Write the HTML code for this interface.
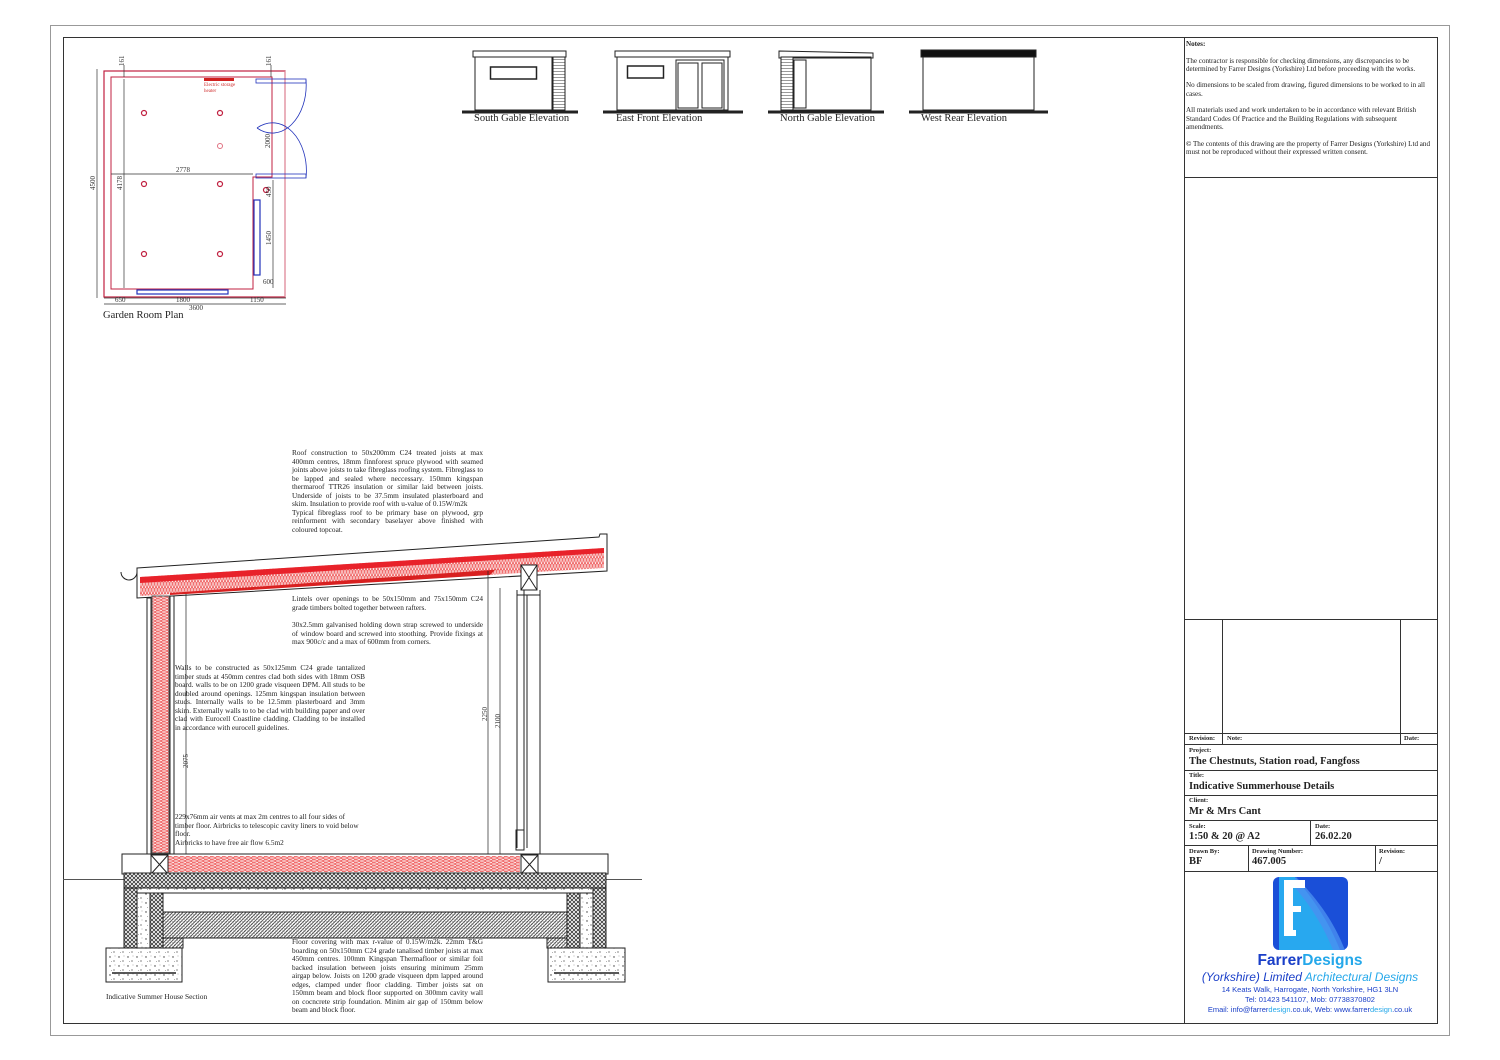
<!DOCTYPE html>
<html><head><meta charset="utf-8"><style>
html,body{margin:0;padding:0;background:#fff;}
body{width:1500px;height:1060px;position:relative;overflow:hidden;font-family:"Liberation Serif",serif;color:#222;}
.t{position:absolute;font-size:7.3px;line-height:8.55px;text-align:justify;text-align-last:left;}
.n{position:absolute;font-size:7.1px;line-height:8.3px;}
.lbl{position:absolute;font-size:10.5px;white-space:nowrap;}
.tb{position:absolute;font-weight:bold;white-space:nowrap;}
.s{font-size:6.5px;}
.b{font-size:10.5px;}
</style></head><body>
<svg width="1500" height="1060" style="position:absolute;left:0;top:0" xmlns="http://www.w3.org/2000/svg">
<defs>
<pattern id="xh" width="4" height="4" patternUnits="userSpaceOnUse"><rect width="4" height="4" fill="#fff"/><path d="M0 0L4 4M4 0L0 4" stroke="#333" stroke-width="0.8"/></pattern>
<pattern id="dh" width="3.5" height="3.5" patternUnits="userSpaceOnUse"><rect width="3.5" height="3.5" fill="#fff"/><path d="M0 3.5L3.5 0" stroke="#444" stroke-width="0.9"/><path d="M0 0L3.5 3.5" stroke="#888" stroke-width="0.5"/></pattern>
<pattern id="conc" width="9" height="9" patternUnits="userSpaceOnUse"><rect width="9" height="9" fill="#fff"/><circle cx="2" cy="3" r="0.7" fill="#333"/><circle cx="6" cy="7" r="0.6" fill="#333"/><circle cx="7" cy="2" r="0.4" fill="#555"/><circle cx="3.5" cy="7.5" r="0.4" fill="#555"/></pattern>
<pattern id="ins" width="3" height="6" patternUnits="userSpaceOnUse"><rect width="3" height="6" fill="#f07070"/><path d="M0 0L1.5 6L3 0" stroke="#fff" stroke-width="0.5" fill="none"/></pattern>
<pattern id="insv" width="6" height="3" patternUnits="userSpaceOnUse"><rect width="6" height="3" fill="#f07070"/><path d="M0 0L6 1.5L0 3" stroke="#fff" stroke-width="0.5" fill="none"/></pattern>
<pattern id="clad" width="4" height="3" patternUnits="userSpaceOnUse"><rect width="4" height="3" fill="#fff"/><path d="M0 2.5H4" stroke="#555" stroke-width="0.6"/></pattern>
</defs>
<rect x="50.5" y="25.5" width="1399" height="1010" fill="none" stroke="#999" stroke-width="1"/>
<rect x="63.5" y="37.5" width="1374" height="986" fill="none" stroke="#333" stroke-width="1"/>
<g stroke="#333" stroke-width="1" fill="none">
<line x1="1184.5" y1="37" x2="1184.5" y2="1023"/>
<line x1="1184" y1="177.5" x2="1437" y2="177.5"/>
<line x1="1184" y1="619.5" x2="1437" y2="619.5"/>
<line x1="1222.5" y1="619" x2="1222.5" y2="744"/>
<line x1="1400.5" y1="619" x2="1400.5" y2="744"/>
<line x1="1184" y1="733.5" x2="1437" y2="733.5"/>
<line x1="1184" y1="744.5" x2="1437" y2="744.5"/>
<line x1="1184" y1="770.5" x2="1437" y2="770.5"/>
<line x1="1184" y1="795.5" x2="1437" y2="795.5"/>
<line x1="1184" y1="820.5" x2="1437" y2="820.5"/>
<line x1="1184" y1="845.5" x2="1437" y2="845.5"/>
<line x1="1184" y1="871.5" x2="1437" y2="871.5"/>
<line x1="1310.5" y1="820" x2="1310.5" y2="845"/>
<line x1="1248.5" y1="845" x2="1248.5" y2="871"/>
<line x1="1375.5" y1="845" x2="1375.5" y2="871"/>
</g>
<rect x="1273" y="877" width="75" height="73" rx="6" fill="#1a4fd8"/>
<path d="M1279 877H1295C1318 905 1330 925 1340 950H1279Z" fill="#28a8ef"/>
<path d="M1296 877C1318 900 1333 920 1345 950H1333C1323 925 1310 905 1292 884Z" fill="#4a8ff0" opacity="0.8"/>
<path d="M1284 880H1305V888H1293V906H1301V912H1293V930H1296V936H1284Z" fill="#fff"/>
<g fill="none">
<rect x="104" y="71" width="181" height="226" stroke="#c02040" stroke-width="1.2"/>
<path d="M111 77H272V177H253V289H111Z" stroke="#c02040" stroke-width="1"/>
<line x1="285" y1="71" x2="285" y2="297" stroke="#e090a0" stroke-width="1"/>
<rect x="137" y="290" width="91" height="4" stroke="#2233bb" stroke-width="1.2"/>
<rect x="254" y="200" width="6" height="75" stroke="#2233bb" stroke-width="1.2"/>
<rect x="256" y="79" width="50" height="4" stroke="#2233bb" stroke-width="0.8"/>
<rect x="256" y="174" width="50" height="4" stroke="#2233bb" stroke-width="0.8"/>
<path d="M306 80A34 48 0 0 1 257 128M306 178A34 48 0 0 0 257 128" stroke="#2233bb" stroke-width="0.8"/>
<rect x="204" y="78" width="30" height="3" fill="#d02020"/>
<g stroke="#c02040" stroke-width="1.2"><circle cx="144" cy="113" r="2.5"/><circle cx="220" cy="113" r="2.5"/><circle cx="144" cy="184" r="2.5"/><circle cx="220" cy="184" r="2.5"/><circle cx="144" cy="254" r="2.5"/><circle cx="220" cy="254" r="2.5"/><circle cx="266" cy="190" r="2.5"/></g>
<circle cx="220" cy="146" r="2.5" stroke="#e07080" stroke-width="1"/>
<g stroke="#333" stroke-width="0.7">
<line x1="97" y1="69" x2="97" y2="298"/><line x1="124" y1="79" x2="124" y2="288"/>
<line x1="111" y1="174" x2="253" y2="174"/>
<line x1="104" y1="304" x2="286" y2="304"/><line x1="104" y1="298" x2="286" y2="298"/>
<line x1="273" y1="180" x2="273" y2="288"/>
<line x1="124" y1="65" x2="124" y2="77"/><line x1="271" y1="65" x2="271" y2="77"/>
</g>
</g>
<g font-family="Liberation Serif,serif" font-size="7" fill="#333">
<text x="95" y="190" transform="rotate(-90 95 190)">4500</text>
<text x="122" y="190" transform="rotate(-90 122 190)">4178</text>
<text x="176" y="172">2778</text>
<text x="270" y="148" transform="rotate(-90 270 148)">2000</text>
<text x="271" y="197" transform="rotate(-90 271 197)">450</text>
<text x="271" y="245" transform="rotate(-90 271 245)">1450</text>
<text x="124" y="66" transform="rotate(-90 124 66)">161</text>
<text x="271" y="66" transform="rotate(-90 271 66)">161</text>
<text x="115" y="302">650</text><text x="176" y="302">1800</text><text x="250" y="302">1150</text>
<text x="189" y="310">3600</text><text x="263" y="284">600</text>
<text x="204" y="86" fill="#d03030" font-size="5">Electric storage</text>
<text x="204" y="92" fill="#d03030" font-size="5">heater</text>
</g>
<g stroke="#222" fill="none" stroke-width="1">
<path d="M473 51L566 51V57H473Z"/><rect x="475" y="57" width="77" height="53"/><rect x="553" y="57" width="12" height="53" fill="url(#clad)"/>
<rect x="490.5" y="67" width="46" height="12" stroke-width="1.5"/>
<line x1="462" y1="112" x2="578" y2="112" stroke-width="3"/>
<rect x="615" y="51" width="115" height="6"/><rect x="617" y="57" width="111" height="53"/>
<rect x="627.5" y="66" width="36" height="12" stroke-width="1.5"/>
<rect x="676" y="60" width="48" height="50"/><rect x="678" y="63" width="20" height="45"/><rect x="702" y="63" width="20" height="45"/>
<line x1="603" y1="112" x2="743" y2="112" stroke-width="3"/>
<path d="M779 51L873 53V58H779Z"/><rect x="781" y="57" width="90" height="53"/><rect x="781" y="57" width="12" height="53" fill="url(#clad)"/><rect x="794" y="60" width="12" height="48"/>
<line x1="768" y1="112" x2="884" y2="112" stroke-width="3"/>
<rect x="921" y="50" width="115" height="7" fill="#111"/><rect x="923" y="57" width="111" height="53"/>
<line x1="909" y1="112" x2="1048" y2="112" stroke-width="3"/>
</g>
<g stroke="#222" stroke-width="1" fill="none">
<path d="M137 568L599 537L600 534H607V545L607 571L137 598Z" fill="#fff"/>
<path d="M140 577L604 548L604 568L140 596Z" fill="url(#ins)" stroke="none"/>
<path d="M140 577L604 548L604 553L140 583Z" fill="#e8222a" stroke="none"/>
<path d="M170 595L490 575L495 570L505 569L170 593Z" fill="#d82020" stroke="none"/>
<path d="M121 572A8 8 0 0 0 137 572" stroke-width="1"/>
<rect x="147" y="598" width="4" height="256"/>
<rect x="152" y="596" width="17" height="257" fill="url(#insv)" stroke="#555"/>
<rect x="170" y="596" width="4" height="258"/>
<line x1="186" y1="594" x2="186" y2="855" stroke-width="0.7"/>
<line x1="488" y1="571" x2="488" y2="855" stroke-width="0.7"/>
<line x1="500" y1="588" x2="500" y2="855" stroke-width="0.7"/>
<rect x="521" y="565" width="16" height="25" fill="#fff"/><path d="M521 565L537 590M537 565L521 590"/>
<path d="M517 590V848M524 590V848M527 595V848M540 590V855M517 595H540"/>
<rect x="516" y="830" width="8" height="20"/>
<rect x="122" y="854" width="486" height="20" fill="#fff"/>
<rect x="168" y="856" width="352" height="16" fill="url(#insv)" stroke="none"/>
<rect x="151" y="855" width="17" height="19"/><path d="M151 855L168 874M168 855L151 874"/>
<rect x="521" y="855" width="17" height="19"/><path d="M521 855L538 874M538 855L521 874"/>
<line x1="63" y1="879.5" x2="642" y2="879.5" stroke="#555"/>
<rect x="124" y="873" width="482" height="15" fill="url(#xh)"/>
<rect x="124" y="888" width="482" height="5" fill="url(#conc)"/>
<rect x="124" y="888" width="13" height="60" fill="url(#xh)"/>
<rect x="137" y="893" width="13" height="55" fill="url(#conc)"/>
<rect x="150" y="893" width="13" height="55" fill="url(#xh)"/>
<rect x="593" y="888" width="13" height="60" fill="url(#xh)"/>
<rect x="580" y="893" width="13" height="55" fill="url(#conc)"/>
<rect x="567" y="893" width="13" height="55" fill="url(#xh)"/>
<rect x="163" y="912" width="404" height="26" fill="url(#dh)"/>
<rect x="163" y="938" width="20" height="10" fill="url(#dh)"/>
<rect x="547" y="938" width="20" height="10" fill="url(#dh)"/>
<rect x="106" y="948" width="76" height="34" fill="url(#conc)"/>
<rect x="548" y="948" width="77" height="34" fill="url(#conc)"/>
<line x1="112" y1="973" x2="176" y2="973" stroke-width="1.5"/>
<line x1="554" y1="973" x2="619" y2="973" stroke-width="1.5"/>
</g>
<g font-family="Liberation Serif,serif" font-size="7" fill="#333">
<text x="188" y="768" transform="rotate(-90 188 768)">2075</text>
<text x="487" y="721" transform="rotate(-90 487 721)">2250</text>
<text x="500" y="728" transform="rotate(-90 500 728)">2100</text>
</g>
</svg>

<div class="lbl" style="left:474px;top:113px">South Gable Elevation</div>
<div class="lbl" style="left:616px;top:113px">East Front Elevation</div>
<div class="lbl" style="left:780px;top:113px">North Gable Elevation</div>
<div class="lbl" style="left:921px;top:113px">West Rear Elevation</div>
<div class="lbl" style="left:103px;top:310px">Garden Room Plan</div>
<div class="lbl" style="left:106px;top:992px;font-size:7.4px">Indicative Summer House Section</div>

<div class="t" style="left:292px;top:449px;width:191px">Roof construction to 50x200mm C24 treated joists at max 400mm centres, 18mm finnforest spruce plywood with seamed joints above joists to take fibreglass roofing system. Fibreglass to be lapped and sealed where neccessary. 150mm kingspan thermaroof TTR26 insulation or similar laid between joists. Underside of joists to be 37.5mm insulated plasterboard and skim. Insulation to provide roof with u-value of 0.15W/m2k<br>Typical fibreglass roof to be primary base on plywood, grp reinforment with secondary baselayer above finished with coloured topcoat.</div>
<div class="t" style="left:292px;top:595px;width:191px">Lintels over openings to be 50x150mm and 75x150mm C24 grade timbers bolted together between rafters.</div>
<div class="t" style="left:292px;top:621px;width:191px">30x2.5mm galvanised holding down strap screwed to underside of window board and screwed into stoothing. Provide fixings at max 900c/c and a max of 600mm from corners.</div>
<div class="t" style="left:175px;top:664px;width:190px">Walls to be constructed as 50x125mm C24 grade tantalized timber studs at 450mm centres clad both sides with 18mm OSB board. walls to be on 1200 grade visqueen DPM. All studs to be doubled around openings. 125mm kingspan insulation between studs. Internally walls to be 12.5mm plasterboard and 3mm skim. Externally walls to to be clad with building paper and over clad with Eurocell Coastline cladding. Cladding to be installed in accordance with eurocell guidelines.</div>
<div class="t" style="left:175px;top:813px;width:190px;text-align:left">229x76mm air vents at max 2m centres to all four sides of timber floor. Airbricks to telescopic cavity liners to void below floor.<br>Airbricks to have free air flow 6.5m2</div>
<div class="t" style="left:292px;top:938px;width:191px">Floor covering with max r-value of 0.15W/m2k. 22mm T&amp;G boarding on 50x150mm C24 grade tanalised timber joists at max 450mm centres. 100mm Kingspan Thermafloor or similar foil backed insulation between joists ensuring minimum 25mm airgap below. Joists on 1200 grade visqueen dpm lapped around edges, clamped under floor cladding. Timber joists sat on 150mm beam and block floor supported on 300mm cavity wall on cocncrete strip foundation. Minim air gap of 150mm below beam and block floor.</div>

<div class="n" style="left:1186px;top:40px;width:250px">
<b>Notes:</b><br><br>
The contractor is responsible for checking dimensions, any discrepancies to be determined by Farrer Designs (Yorkshire) Ltd before proceeding with the works.<br><br>
No dimensions to be scaled from drawing, figured dimensions to be worked to in all cases.<br><br>
All materials used and work undertaken to be in accordance with relevant British Standard Codes Of Practice and the Building Regulations with subsequent amendments.<br><br>
<b>©</b> The contents of this drawing are the property of Farrer Designs (Yorkshire) Ltd and must not be reproduced without their expressed written consent.</div>

<div class="tb s" style="left:1189px;top:735px">Revision:</div>
<div class="tb s" style="left:1227px;top:735px">Note:</div>
<div class="tb s" style="left:1404px;top:735px">Date:</div>
<div class="tb s" style="left:1189px;top:747px">Project:</div>
<div class="tb b" style="left:1189px;top:756px">The Chestnuts, Station road, Fangfoss</div>
<div class="tb s" style="left:1189px;top:772px">Title:</div>
<div class="tb b" style="left:1189px;top:781px">Indicative Summerhouse Details</div>
<div class="tb s" style="left:1189px;top:797px">Client:</div>
<div class="tb b" style="left:1189px;top:806px">Mr &amp; Mrs Cant</div>
<div class="tb s" style="left:1189px;top:823px">Scale:</div>
<div class="tb b" style="left:1189px;top:831px">1:50 &amp; 20 @ A2</div>
<div class="tb s" style="left:1315px;top:823px">Date:</div>
<div class="tb b" style="left:1315px;top:831px">26.02.20</div>
<div class="tb s" style="left:1189px;top:848px">Drawn By:</div>
<div class="tb b" style="left:1189px;top:856px">BF</div>
<div class="tb s" style="left:1252px;top:848px">Drawing Number:</div>
<div class="tb b" style="left:1252px;top:856px">467.005</div>
<div class="tb s" style="left:1379px;top:848px">Revision:</div>
<div class="tb b" style="left:1379px;top:856px">/</div>

<div style="position:absolute;left:1185px;top:952px;width:250px;text-align:center;font-family:'Liberation Sans',sans-serif;">
<div style="font-size:15.5px;font-weight:bold;line-height:18px;color:#1a3fc8">Farrer<span style="color:#25a8ea">Designs</span></div>
<div style="font-size:12px;font-style:italic;line-height:15px;color:#1a3fc8">(Yorkshire) Limited <span style="color:#25a8ea">Architectural Designs</span></div>
<div style="font-size:7.5px;line-height:10px;color:#1a3fc8">14 Keats Walk, Harrogate, North Yorkshire, HG1 3LN<br>Tel: 01423 541107, Mob: 07738370802<br>Email: info@farrer<span style="color:#25a8ea">design</span>.co.uk, Web: www.farrer<span style="color:#25a8ea">design</span>.co.uk</div>
</div>
</body></html>
